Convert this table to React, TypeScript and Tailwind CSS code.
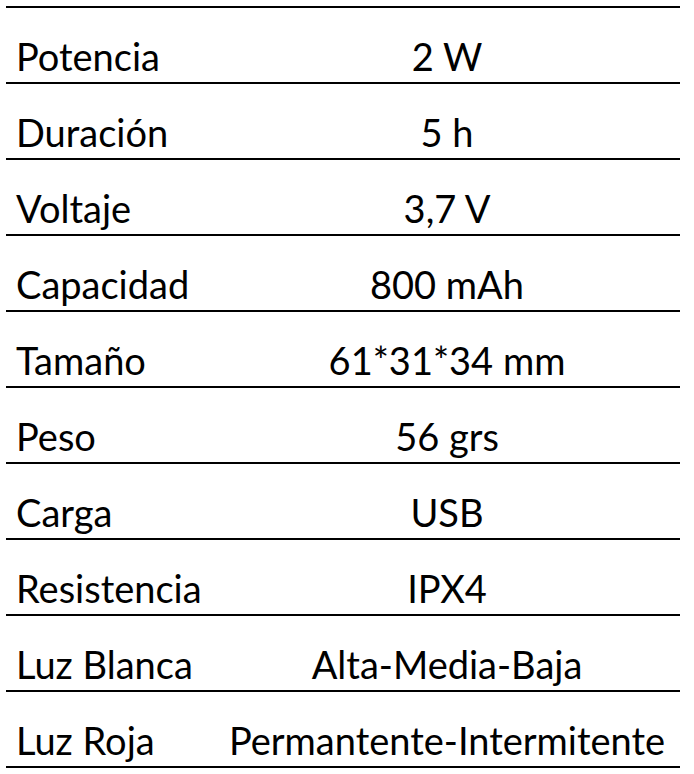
const specs: [string, string][] = [
  ["Potencia", "2 W"],
  ["Duración", "5 h"],
  ["Voltaje", "3,7 V"],
  ["Capacidad", "800 mAh"],
  ["Tamaño", "61*31*34 mm"],
  ["Peso", "56 grs"],
  ["Carga", "USB"],
  ["Resistencia", "IPX4"],
  ["Luz Blanca", "Alta-Media-Baja"],
  ["Luz Roja", "Permantente-Intermitente"],
];

export default function App() {
  return (
    <div className="min-h-[774px] w-[694px] bg-white pt-[6px] pl-[6px] font-['Lato',sans-serif] text-black">
      <div className="w-[674px] border-t-2 border-black">
        {specs.map(([label, value]) => (
          <div
            key={label}
            className="flex h-[76px] items-end border-b-2 border-black pb-[6px] text-[38px] leading-[40px]"
          >
            <div className="w-[208px] pl-[10px]">{label}</div>
            <div className="flex-1 text-center">{value}</div>
          </div>
        ))}
      </div>
    </div>
  );
}
